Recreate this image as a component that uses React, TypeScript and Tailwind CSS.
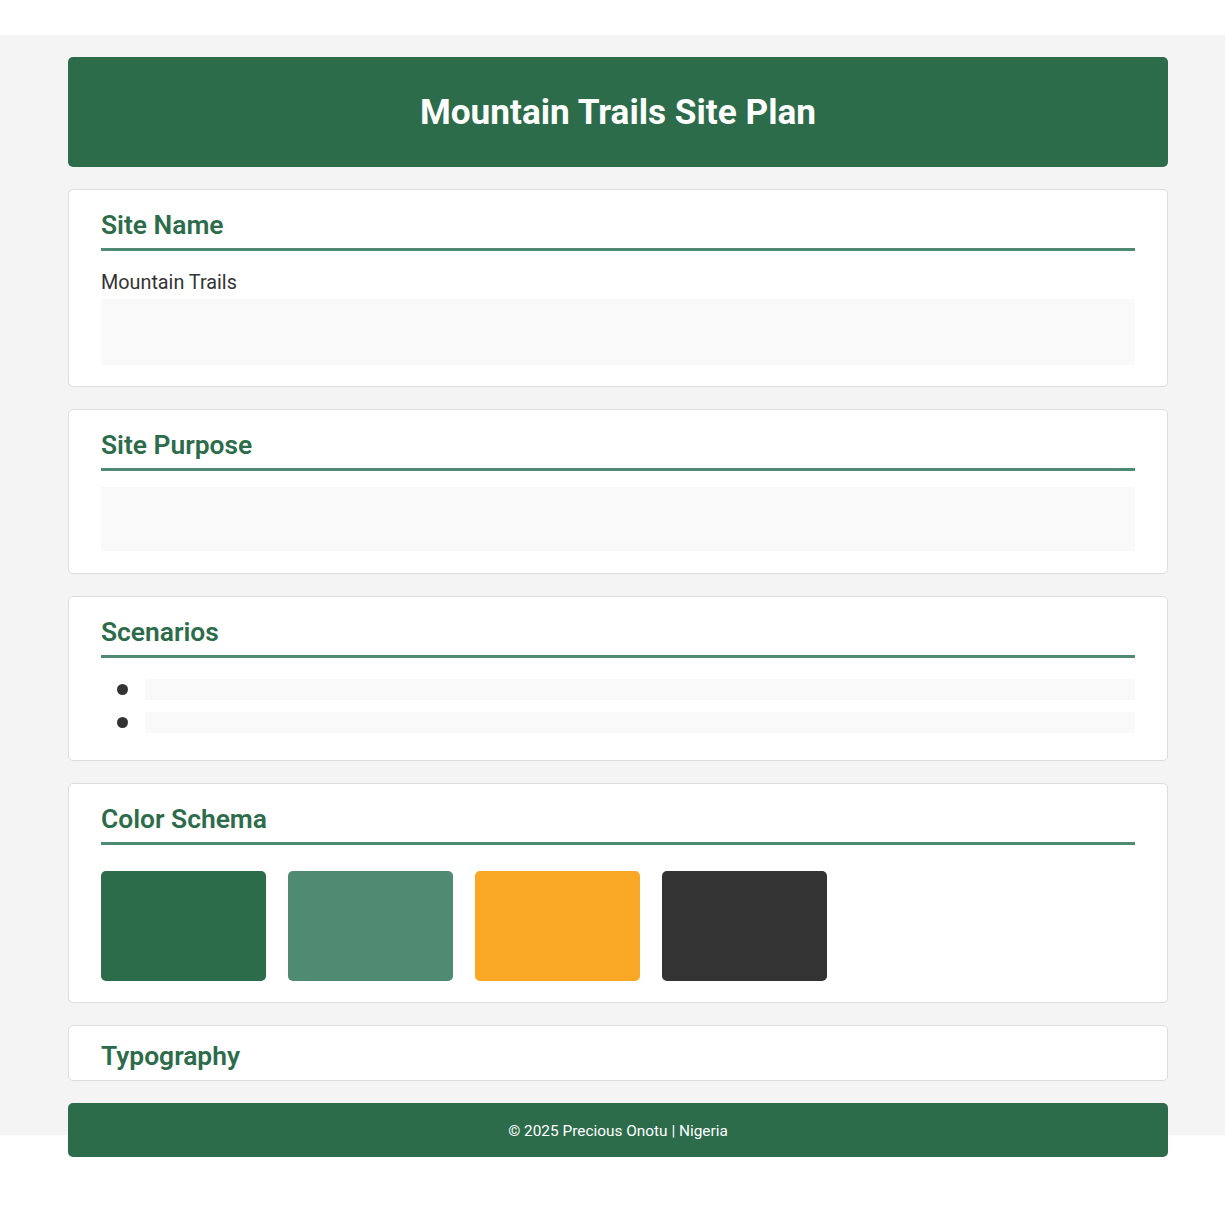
const PRIMARY = 'text-[#2c6c4b]'

function SectionTitle({ children, line = true }: { children: string; line?: boolean }) {
  return (
    <h2
      className={`text-[26.4px] font-semibold leading-[28px] ${PRIMARY} pt-px pb-[9px] ${line ? 'border-b-[3px] border-[#4f8a72]' : ''}`}
    >
      {children}
    </h2>
  )
}

const swatches = ['bg-[#2c6c4b]', 'bg-[#4f8a72]', 'bg-[#f9a826]', 'bg-[#333333]']

export default function App() {
  return (
    <div className="min-h-[1210px] bg-white font-['Roboto',sans-serif] text-[#333]">
      <div className="mt-[35px] h-[1100px] bg-[#f4f4f4] pt-[22px]">
        <div className="ml-[68px] flex w-[1100px] flex-col gap-[22px]">
          {/* Header */}
          <header className="flex h-[110px] items-center justify-center rounded-[5px] bg-[#2c6c4b]">
            <h1 className="text-[35.2px] font-bold text-white">Mountain Trails Site Plan</h1>
          </header>

          {/* Site Name */}
          <section className="rounded-[5px] border border-[#dddddd] bg-white px-8 pt-5 pb-[21px]">
            <SectionTitle>Site Name</SectionTitle>
            <p className="mt-[17px] text-[19.8px] leading-[29px]">Mountain Trails</p>
            <div className="mt-[2px] h-[66px] bg-[#f9f9f9]" />
          </section>

          {/* Site Purpose */}
          <section className="rounded-[5px] border border-[#dddddd] bg-white px-8 pt-5 pb-[22px]">
            <SectionTitle>Site Purpose</SectionTitle>
            <div className="mt-4 h-[64px] bg-[#f9f9f9]" />
          </section>

          {/* Scenarios */}
          <section className="rounded-[5px] border border-[#dddddd] bg-white px-8 pt-5 pb-[27px]">
            <SectionTitle>Scenarios</SectionTitle>
            <ul className="mt-[21px] flex flex-col gap-3">
              {[0, 1].map(i => (
                <li key={i} className="flex items-center">
                  <span className="ml-[16px] mr-[17px] h-[11px] w-[11px] rounded-full bg-[#333]" />
                  <div className="h-[21px] flex-1 bg-[#f9f9f9]" />
                </li>
              ))}
            </ul>
          </section>

          {/* Color Schema */}
          <section className="rounded-[5px] border border-[#dddddd] bg-white px-8 pt-5 pb-[21px]">
            <SectionTitle>Color Schema</SectionTitle>
            <div className="mt-[26px] flex gap-[22px]">
              {swatches.map(c => (
                <div key={c} className={`h-[110px] w-[165px] rounded-[5px] ${c}`} />
              ))}
            </div>
          </section>

          {/* Typography */}
          <section className="h-[56px] overflow-hidden rounded-[5px] border border-[#dddddd] bg-white px-8 pt-[15px]">
            <SectionTitle line={false}>Typography</SectionTitle>
          </section>

          {/* Footer */}
          <footer className="flex h-[54px] items-center justify-center rounded-[5px] bg-[#2c6c4b] pt-[3px]">
            <p className="text-[15.4px] text-white">© 2025 Precious Onotu | Nigeria</p>
          </footer>
        </div>
      </div>
    </div>
  )
}
